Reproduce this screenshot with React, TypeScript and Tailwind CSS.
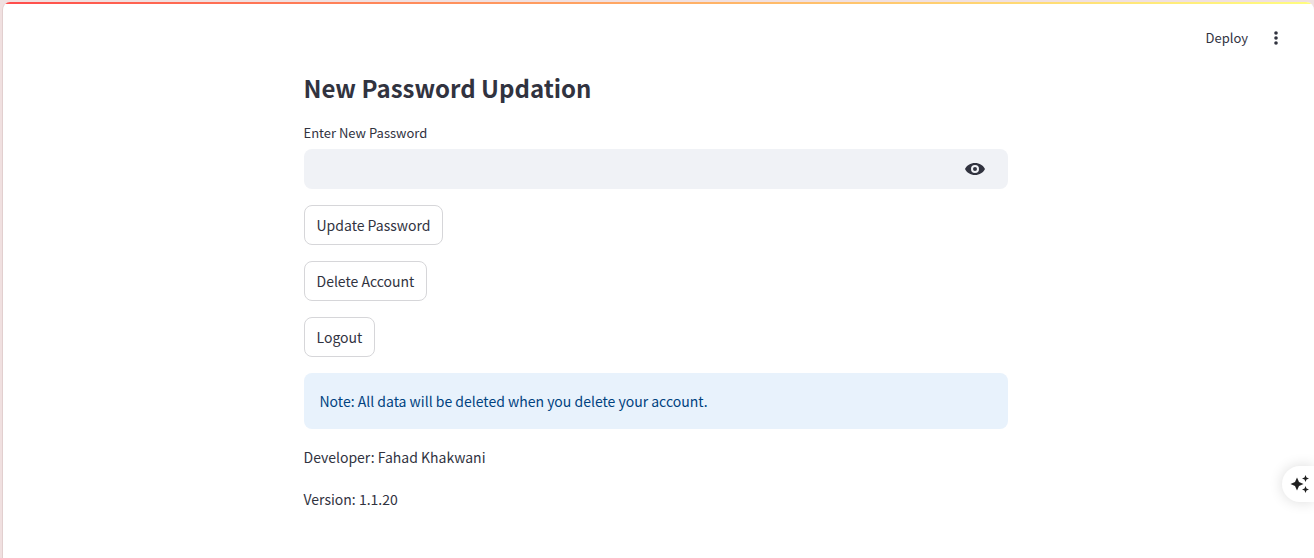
import { useState } from "react";

const actions = ["Update Password", "Delete Account", "Logout"];

export default function App() {
  const [visible, setVisible] = useState(false);
  return (
    <div className="min-h-screen bg-[#f0e0e0] pl-[2px] pt-[2px] font-['Noto_Sans_CJK_SC','Noto_Sans',sans-serif] text-sm text-[#31333f]">
      <div className="relative flex min-h-[calc(100vh-2px)] flex-col overflow-hidden rounded-t-lg border-l border-[#e2cfcf] bg-white">
        <div className="h-[2px] shrink-0 bg-linear-to-r from-[#ff4b4b] to-[#fffd80]" />
        <header className="flex h-[68px] items-center justify-end gap-5 pr-[30px]">
          <button type="button" className="text-[13px]">Deploy</button>
          <button type="button" aria-label="Main menu" className="flex w-4 justify-center">
            <svg viewBox="0 0 16 16" className="size-4" fill="currentColor">
              <circle cx="8" cy="3" r="1.800" />
              <circle cx="8" cy="8" r="1.800" />
              <circle cx="8" cy="13" r="1.800" />
            </svg>
          </button>
        </header>
        <div className="pr-[6px]">
          <main className="mx-auto flex w-full max-w-[704px] flex-col gap-4">
            <h1 className="text-2xl leading-8 font-bold">New Password Updation</h1>
            <div className="pt-[3px]">
              <label htmlFor="password" className="mb-[6px] block text-[13px] leading-5">Enter New Password</label>
              <div className="flex h-10 items-center rounded-lg bg-[#f0f2f6] pr-[22px]">
                <input id="password" type={visible ? "text" : "password"} className="h-full min-w-0 flex-1 bg-transparent px-3 outline-none" />
                <button type="button" aria-label="Show password text" onClick={() => setVisible(!visible)}>
                  <svg viewBox="0 0 22 16" className="h-4 w-[22px]" fill="currentColor">
                    <path fillRule="evenodd" d="M11 2C6.500 2 2.700 4.400 1 8c1.700 3.600 5.500 6 10 6s8.300-2.400 10-6c-1.700-3.600-5.500-6-10-6Zm0 10a4 4 0 1 1 0-8 4 4 0 0 1 0 8Zm0-2a2 2 0 1 0 0-4 2 2 0 0 0 0 4Z" />
                  </svg>
                </button>
              </div>
            </div>
            {actions.map((label) => (
              <button key={label} type="button" className="h-10 self-start rounded-lg border border-[#d6d6d9] px-3">
                {label}
              </button>
            ))}
            <p className="rounded-lg bg-[#e8f2fc] p-4 leading-6 text-[#004280]">
              Note: All data will be deleted when you delete your account.
            </p>
            <div className="flex flex-col gap-[18px] leading-6">
              <p>Developer: Fahad Khakwani</p>
              <p>Version: 1.1.20</p>
            </div>
          </main>
        </div>
        <button type="button" aria-label="Assistant" className="absolute right-0 bottom-14 flex h-9 w-8 items-center rounded-l-full bg-white pl-2 shadow-[0_0_14px_rgba(0,0,0,0.14)]">
          <svg viewBox="0 0 20 20" className="size-5" fill="#1f1f1f">
            <path d="M7 3.500 9 8l4.500 2L9 12l-2 4.500L5 12 .5 10 5 8ZM15.500 1l1 2.500 2.500 1-2.500 1-1 2.500-1-2.500-2.500-1 2.500-1ZM15.500 12l1 2.500 2.500 1-2.500 1-1 2.500-1-2.500-2.500-1 2.500-1Z" />
          </svg>
        </button>
      </div>
    </div>
  );
}
